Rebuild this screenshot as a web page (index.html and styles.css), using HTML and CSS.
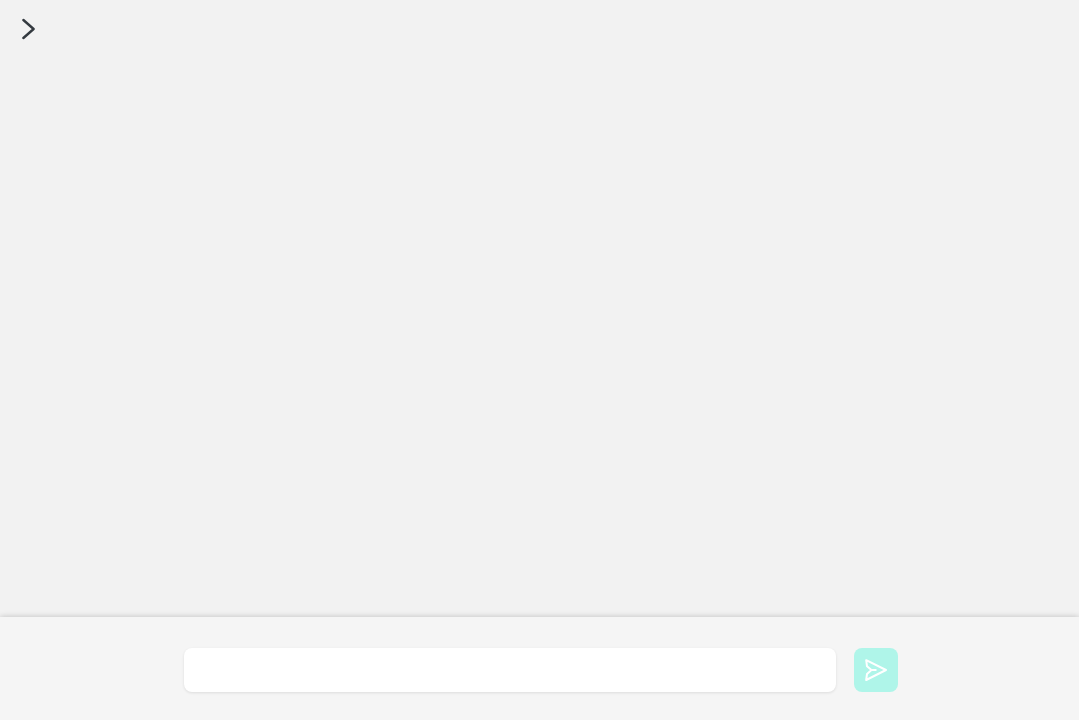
FILE: index.html
```
<!DOCTYPE html>
<html lang="en">
<head>
  <meta charset="UTF-8">
  <meta name="viewport" content="width=device-width, initial-scale=1.0">
  <title>Chat</title>
  <link rel="stylesheet" href="styles.css">
</head>
<body>

  <header class="top-bar">
    <button class="menu-toggle" type="button" aria-label="Open menu">
      <svg width="14" height="22" viewBox="0 0 14 22" fill="none" stroke="currentColor" stroke-width="2.4">
        <path d="M1.4 2 L11.6 11 L1.4 20" stroke-linecap="round" stroke-linejoin="round"/>
      </svg>
    </button>
  </header>

  <main class="messages" id="messages"></main>

  <footer class="chat-footer">
    <form class="chat-form" id="chatForm">
      <input class="chat-input" id="chatInput" type="text" aria-label="Message" autocomplete="off">
      <button class="send-button" type="submit" aria-label="Send">
        <svg width="24" height="24" viewBox="0 0 24 24" fill="none" stroke="currentColor" stroke-width="2">
          <path d="M2.2 2.2 L22 12 L2.2 22 L3 16 L7.5 12 L3 8.3 Z M7.5 12 H12.5" stroke-linejoin="round"/>
        </svg>
      </button>
    </form>
  </footer>

  <script>
    document.getElementById("chatForm").addEventListener("submit", (event) => {
      event.preventDefault();
      const input = document.getElementById("chatInput");
      if (!input.value.trim()) return;
      const message = document.createElement("p");
      message.textContent = input.value;
      document.getElementById("messages").appendChild(message);
      input.value = "";
    });
  </script>

</body>
</html>
```
FILE: styles.css
```
* {
  box-sizing: border-box;
}

body {
  display: flex;
  flex-direction: column;
  height: 100vh;
  margin: 0;
  background: #f2f2f2;
  color: #343a40;
  font-family: "Open Sans", Arial, sans-serif;
}

button {
  display: flex;
  align-items: center;
  justify-content: center;
  padding: 0;
  border: none;
  cursor: pointer;
}

.top-bar {
  padding: 18px 22px;
}

.menu-toggle {
  background: none;
  color: #343a40;
}

.messages {
  flex: 1;
  overflow-y: auto;
  padding: 0 22px;
}

.chat-footer {
  padding: 31px 20px 28px 23px;
  background: #f5f5f5;
  box-shadow: 0 0 6px rgba(0, 0, 0, 0.22);
}

.chat-form {
  display: flex;
  gap: 18px;
  max-width: 714px;
  margin: 0 auto;
}

.chat-input {
  flex: 1;
  min-width: 0;
  height: 44px;
  padding: 0 14px;
  border: none;
  border-radius: 8px;
  outline: none;
  background: #fff;
  box-shadow: 0 1px 3px rgba(0, 0, 0, 0.1);
  font-family: inherit;
  font-size: 16px;
}

.send-button {
  flex-shrink: 0;
  width: 44px;
  height: 44px;
  border-radius: 8px;
  background: #aff5e9;
  color: #fff;
}
```
